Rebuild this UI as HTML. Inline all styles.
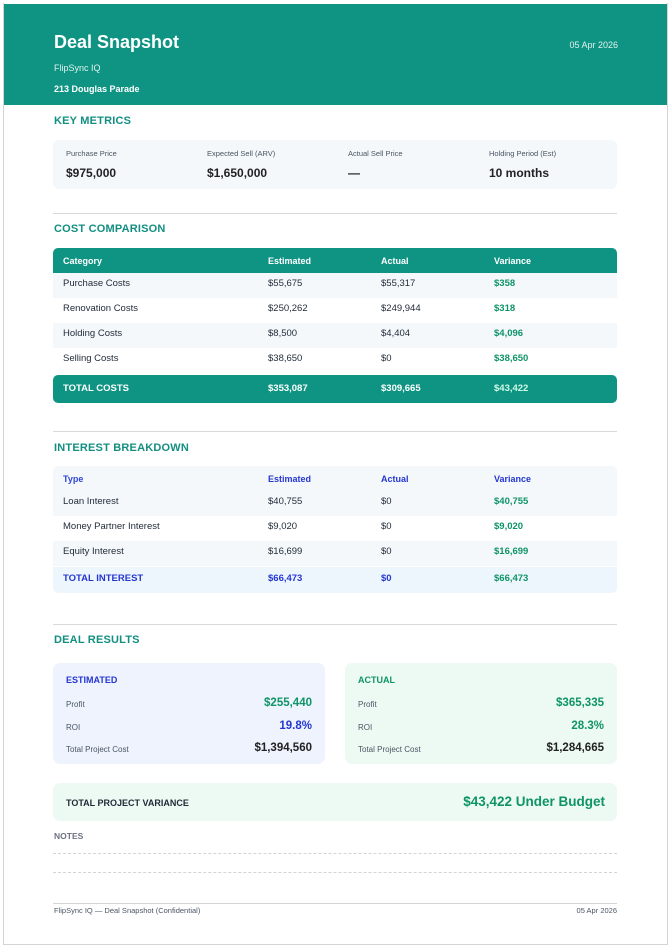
<!DOCTYPE html>
<html><head><meta charset="utf-8"><style>
*{margin:0;padding:0;box-sizing:border-box}
body{width:671px;height:947px;background:#fff;font-family:"Liberation Sans",Arial,sans-serif;position:relative;overflow:hidden;color:#1f2937}
.frame{position:absolute;left:3px;top:3px;width:665px;height:942px;border:1px solid #d4d4d4;border-top:none}
.hdr{position:absolute;left:4px;top:4px;width:663px;height:101px;background:#0f9484;color:#fff}
.a{position:absolute}
.sec{position:absolute;left:54px;font-size:11px;font-weight:bold;color:#138f82;letter-spacing:.2px}
.div{position:absolute;left:53px;width:564px;height:1px;background:#d9d9d9}
.row{position:absolute;left:53px;width:564px;height:25px;font-size:9.5px}
.row span{position:absolute;top:8px}
.c1{left:10px}.c2{left:215px}.c3{left:328px}.c4{left:441px}
.g{color:#0f9466;font-weight:bold}
.b{color:#2536d1;font-weight:bold}
.lt{background:#f4f8fb}
.card{position:absolute;top:663px;width:272px;height:101px;border-radius:7px;font-size:8px;color:#4b5563}
.card .t{position:absolute;left:13px;top:12px;font-size:9px;font-weight:bold}
.card .l{position:absolute;left:13px}
.card .v{position:absolute;right:13px;font-size:11.5px;font-weight:bold}
</style></head><body>
<div class="frame"></div>
<div class="hdr">
<div class="a" style="left:50px;top:28px;font-size:18px;font-weight:bold">Deal Snapshot</div>
<div class="a" style="left:50px;top:59px;font-size:9px;color:#e0f2ef">FlipSync IQ</div>
<div class="a" style="left:50px;top:80px;font-size:9px;font-weight:bold">213 Douglas Parade</div>
<div class="a" style="right:49px;top:36px;font-size:9px;color:#e0f2ef">05 Apr 2026</div>
</div>

<div class="sec" style="top:115px">KEY METRICS</div>
<div class="a" style="left:53px;top:140px;width:564px;height:49px;background:#f4f8fb;border-radius:6px">
<div class="a" style="left:13px;top:9px;font-size:7.5px;color:#4b5563">Purchase Price</div>
<div class="a" style="left:13px;top:26px;font-size:12px;font-weight:bold;color:#222">$975,000</div>
<div class="a" style="left:154px;top:9px;font-size:7.5px;color:#4b5563">Expected Sell (ARV)</div>
<div class="a" style="left:154px;top:26px;font-size:12px;font-weight:bold;color:#222">$1,650,000</div>
<div class="a" style="left:295px;top:9px;font-size:7.5px;color:#4b5563">Actual Sell Price</div>
<div class="a" style="left:295px;top:26px;font-size:12px;font-weight:bold;color:#222">—</div>
<div class="a" style="left:436px;top:9px;font-size:7.5px;color:#4b5563">Holding Period (Est)</div>
<div class="a" style="left:436px;top:26px;font-size:12px;font-weight:bold;color:#222">10 months</div>
</div>

<div class="div" style="top:213px"></div>
<div class="sec" style="top:223px">COST COMPARISON</div>
<div class="row" style="top:248px;background:#0f9484;color:#fff;font-weight:bold;border-radius:5px 5px 0 0;font-size:9px"><span class="c1">Category</span><span class="c2">Estimated</span><span class="c3">Actual</span><span class="c4">Variance</span></div>
<div class="row lt" style="top:273px"><span class="c1" style="top:5px">Purchase Costs</span><span class="c2" style="top:5px">$55,675</span><span class="c3" style="top:5px">$55,317</span><span class="c4 g" style="top:5px">$358</span></div>
<div class="row" style="top:298px"><span class="c1" style="top:5px">Renovation Costs</span><span class="c2" style="top:5px">$250,262</span><span class="c3" style="top:5px">$249,944</span><span class="c4 g" style="top:5px">$318</span></div>
<div class="row lt" style="top:323px"><span class="c1" style="top:5px">Holding Costs</span><span class="c2" style="top:5px">$8,500</span><span class="c3" style="top:5px">$4,404</span><span class="c4 g" style="top:5px">$4,096</span></div>
<div class="row" style="top:348px"><span class="c1" style="top:5px">Selling Costs</span><span class="c2" style="top:5px">$38,650</span><span class="c3" style="top:5px">$0</span><span class="c4 g" style="top:5px">$38,650</span></div>
<div class="row" style="top:375px;height:28px;background:#0f9484;color:#fff;font-weight:bold;border-radius:5px"><span class="c1" style="top:8px">TOTAL COSTS</span><span class="c2" style="top:8px">$353,087</span><span class="c3" style="top:8px">$309,665</span><span class="c4" style="top:8px;color:#d1fae5">$43,422</span></div>

<div class="div" style="top:431px"></div>
<div class="sec" style="top:442px">INTEREST BREAKDOWN</div>
<div class="row lt" style="top:466px;border-radius:5px 5px 0 0;font-size:9px"><span class="c1 b" style="color:#2f45d6">Type</span><span class="c2 b">Estimated</span><span class="c3 b">Actual</span><span class="c4 b">Variance</span></div>
<div class="row lt" style="top:491px"><span class="c1" style="top:5px">Loan Interest</span><span class="c2" style="top:5px">$40,755</span><span class="c3" style="top:5px">$0</span><span class="c4 g" style="top:5px">$40,755</span></div>
<div class="row" style="top:516px"><span class="c1" style="top:5px">Money Partner Interest</span><span class="c2" style="top:5px">$9,020</span><span class="c3" style="top:5px">$0</span><span class="c4 g" style="top:5px">$9,020</span></div>
<div class="row lt" style="top:541px"><span class="c1" style="top:5px">Equity Interest</span><span class="c2" style="top:5px">$16,699</span><span class="c3" style="top:5px">$0</span><span class="c4 g" style="top:5px">$16,699</span></div>
<div class="row" style="top:567px;height:26px;background:#eef6fd;border-radius:0 0 5px 5px"><span class="c1 b" style="top:6px">TOTAL INTEREST</span><span class="c2 b" style="top:6px">$66,473</span><span class="c3 b" style="top:6px">$0</span><span class="c4 g" style="top:6px">$66,473</span></div>

<div class="div" style="top:624px"></div>
<div class="sec" style="top:634px">DEAL RESULTS</div>
<div class="card" style="left:53px;background:#eef3fe">
<div class="t" style="color:#2536d1">ESTIMATED</div>
<div class="l" style="top:37px">Profit</div><div class="v" style="top:34px;color:#0f9466">$255,440</div>
<div class="l" style="top:60px">ROI</div><div class="v" style="top:57px;color:#2536d1">19.8%</div>
<div class="l" style="top:82px">Total Project Cost</div><div class="v" style="top:79px;color:#222">$1,394,560</div>
</div>
<div class="card" style="left:345px;background:#ecfaf3">
<div class="t" style="color:#0f9466">ACTUAL</div>
<div class="l" style="top:37px">Profit</div><div class="v" style="top:34px;color:#0f9466">$365,335</div>
<div class="l" style="top:60px">ROI</div><div class="v" style="top:57px;color:#0f9466">28.3%</div>
<div class="l" style="top:82px">Total Project Cost</div><div class="v" style="top:79px;color:#222">$1,284,665</div>
</div>

<div class="a" style="left:53px;top:783px;width:564px;height:38px;background:#ecfaf3;border-radius:7px">
<div class="a" style="left:13px;top:15px;font-size:9px;font-weight:bold;color:#1f2937">TOTAL PROJECT VARIANCE</div>
<div class="a" style="right:12px;top:11px;font-size:13.5px;font-weight:bold;color:#0f9466">$43,422 Under Budget</div>
</div>

<div class="a" style="left:54px;top:831px;font-size:8.5px;font-weight:bold;color:#6b7280">NOTES</div>
<div class="a" style="left:53px;top:853px;width:564px;border-top:1px dashed #d4d4d4"></div>
<div class="a" style="left:53px;top:872px;width:564px;border-top:1px dashed #d4d4d4"></div>
<div class="a" style="left:53px;top:903px;width:564px;height:1px;background:#d4d4d4"></div>
<div class="a" style="left:54px;top:906px;font-size:7.5px;color:#4b5563">FlipSync IQ — Deal Snapshot (Confidential)</div>
<div class="a" style="right:54px;top:906px;font-size:7.5px;color:#4b5563">05 Apr 2026</div>
</body></html>
